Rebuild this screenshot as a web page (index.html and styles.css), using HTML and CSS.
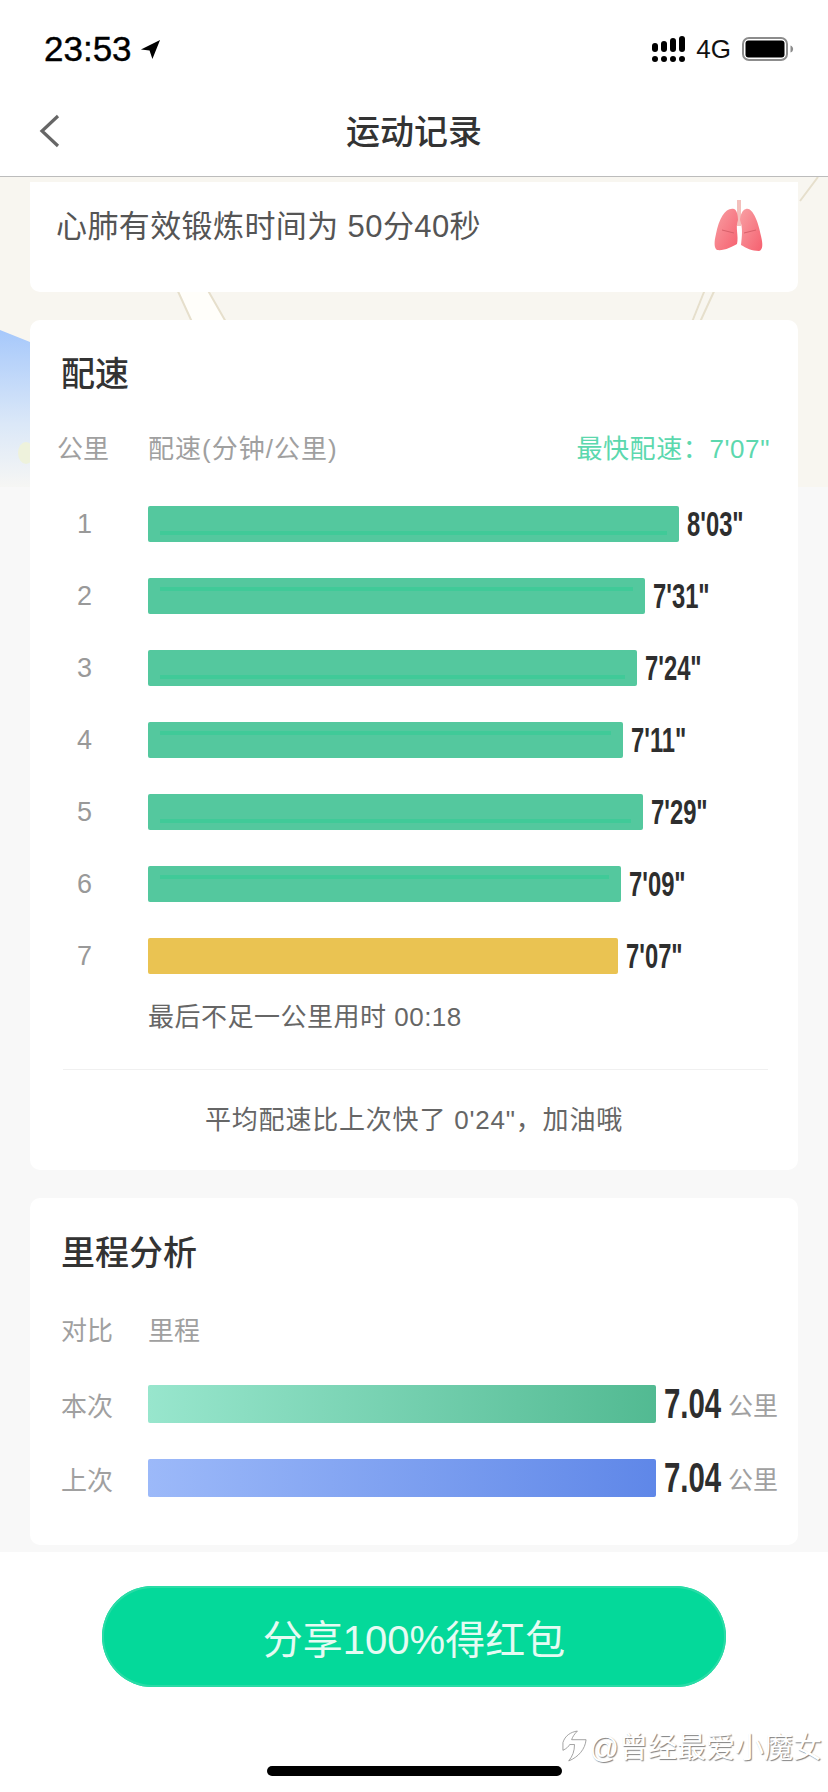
FILE: index.html
```html
<!DOCTYPE html>
<html lang="zh-CN">
<head>
    <meta charset="UTF-8">
    <title>运动记录</title>
    <link rel="stylesheet" href="styles.css">
</head>
<body>
    <div class="phone">
        <div class="status-bar">
            <div class="status-time">
                <span>23:53</span>
                <svg class="location" viewBox="0 0 22 22"><path d="M21 1 L1 11 L10 12 L13 21 Z" fill="#000"/></svg>
            </div>
            <div class="status-right">
                <svg class="signal" viewBox="0 0 33 26" fill="#000">
                    <rect x="0" y="7" width="6" height="9" rx="3"/><rect x="0" y="20" width="6" height="6" rx="3"/>
                    <rect x="9" y="5" width="6" height="11" rx="3"/><rect x="9" y="20" width="6" height="6" rx="3"/>
                    <rect x="18" y="2" width="6" height="14" rx="3"/><rect x="18" y="20" width="6" height="6" rx="3"/>
                    <rect x="27" y="0" width="6" height="16" rx="3"/><rect x="27" y="20" width="6" height="6" rx="3"/>
                </svg>
                <span class="net">4G</span>
                <svg class="battery" viewBox="0 0 53 24">
                    <rect x="1" y="1" width="44" height="22" rx="6" fill="none" stroke="#8c8c8c" stroke-width="2"/>
                    <rect x="3.5" y="3.5" width="39" height="17" rx="3" fill="#000"/>
                    <path d="M48.5 8.5 C52 9.5 52 14.5 48.5 15.5 Z" fill="#8c8c8c"/>
                </svg>
            </div>
        </div>

        <div class="nav-bar">
            <svg class="back" viewBox="0 0 22 34"><path d="M19 2 L3 17 L19 32" fill="none" stroke="#666" stroke-width="3.2"/></svg>
            <h1>运动记录</h1>
        </div>

        <div class="content">
            <div class="map-bg">
                <svg class="map-roads" viewBox="0 0 828 310" preserveAspectRatio="none">
                    <defs>
                        <linearGradient id="water" x1="0" y1="0" x2="0" y2="1">
                            <stop offset="0" stop-color="#a6c8fb"/>
                            <stop offset="0.6" stop-color="#dbe8f8"/>
                            <stop offset="1" stop-color="#f6f6f4"/>
                        </linearGradient>
                    </defs>
                    <path d="M176 110 L192 145 L226 145 L206 110 Z" fill="#fffefa"/>
                    <path d="M176 110 L192 145 M206 110 L226 145 M716 110 L700 145 M706 110 L692 145 M818 0 L800 24" fill="none" stroke="#e6dfcc" stroke-width="2"/>
                    <path d="M0 153 L30 165 L30 310 L0 310 Z" fill="url(#water)"/>
                    <ellipse cx="26" cy="276" rx="8" ry="11" fill="#eef2dc"/>
                </svg>
            </div>

            <div class="card card-lung">
                <p>心肺有效锻炼时间为 50分40秒</p>
                <svg class="lung" viewBox="0 0 50 54">
                    <defs>
                        <linearGradient id="lobe" x1="0" y1="0" x2="1" y2="1">
                            <stop offset="0" stop-color="#f8a0a4"/>
                            <stop offset="1" stop-color="#f6606f"/>
                        </linearGradient>
                    </defs>
                    <rect x="23" y="0" width="4" height="26" fill="#f3c0bc"/>
                    <path d="M20 9 C12 7 5 18 2 34 C0 42 0 48 3 50 C10 51 18 47 23 44 C25 36 21 28 24 20 C24 16 23 10 20 9 Z" fill="url(#lobe)"/>
                    <path d="M32 9 C38 7 44 20 47 36 C49 44 49 50 45 51 C38 51 32 48 27 45 C28 36 29 28 26 20 C26 16 28 10 32 9 Z" fill="url(#lobe)"/>
                    <path d="M8 30 L20 33 M30 33 L42 30" fill="none" stroke="#d9606a" stroke-width="1"/>
                </svg>
            </div>

            <div class="card card-pace">
                <h2>配速</h2>
                <div class="pace-head">
                    <span class="col-km">公里</span>
                    <span class="col-pace">配速(分钟/公里)</span>
                    <span class="fastest">最快配速：7'07"</span>
                </div>
                <div class="pace-list">
                    <div class="pace-row">
                        <span class="pace-no">1</span>
                        <div class="bar bar-low" style="width: 532px"></div>
                        <span class="pace-val">8'03"</span>
                    </div>
                    <div class="pace-row">
                        <span class="pace-no">2</span>
                        <div class="bar" style="width: 497px"></div>
                        <span class="pace-val">7'31"</span>
                    </div>
                    <div class="pace-row">
                        <span class="pace-no">3</span>
                        <div class="bar bar-low" style="width: 489px"></div>
                        <span class="pace-val">7'24"</span>
                    </div>
                    <div class="pace-row">
                        <span class="pace-no">4</span>
                        <div class="bar" style="width: 475px"></div>
                        <span class="pace-val">7'11"</span>
                    </div>
                    <div class="pace-row">
                        <span class="pace-no">5</span>
                        <div class="bar bar-low" style="width: 495px"></div>
                        <span class="pace-val">7'29"</span>
                    </div>
                    <div class="pace-row">
                        <span class="pace-no">6</span>
                        <div class="bar" style="width: 473px"></div>
                        <span class="pace-val">7'09"</span>
                    </div>
                    <div class="pace-row">
                        <span class="pace-no">7</span>
                        <div class="bar bar-best" style="width: 470px"></div>
                        <span class="pace-val">7'07"</span>
                    </div>
                </div>
                <p class="pace-note">最后不足一公里用时 00:18</p>
                <p class="pace-summary">平均配速比上次快了 0'24"，加油哦</p>
            </div>

            <div class="card card-dist">
                <h2>里程分析</h2>
                <div class="dist-head">
                    <span class="col-km">对比</span>
                    <span>里程</span>
                </div>
                <div class="dist-row">
                    <span class="col-km">本次</span>
                    <div class="dist-bar dist-now"></div>
                    <span class="dist-val">7.04</span>
                    <span class="dist-unit">公里</span>
                </div>
                <div class="dist-row">
                    <span class="col-km">上次</span>
                    <div class="dist-bar dist-last"></div>
                    <span class="dist-val">7.04</span>
                    <span class="dist-unit">公里</span>
                </div>
            </div>
        </div>

        <div class="footer">
            <button class="share-btn">分享100%得红包</button>
            <div class="watermark">
                <svg class="wm-logo" viewBox="0 0 28 34"><path d="M2 14 C4 7 10 3 17 2 C14 5 12 8 11 11 L26 11 C25 21 18 29 8 33 C12 28 14 23 14 16 L9 16 C8 18 6 20 2 22 Z" fill="#fff" stroke="#888" stroke-width="0.8"/></svg>
                <span>@曾经最爱小魔女</span>
            </div>
            <div class="home-bar"></div>
        </div>
    </div>
</body>
</html>
```

FILE: styles.css
```css
* {
    margin: 0;
    padding: 0;
    box-sizing: border-box;
}

body {
    font-family: 'Liberation Sans', 'Noto Sans CJK SC', sans-serif;
    background-color: #fff;
    color: #333;
}

.phone {
    width: 828px;
    height: 1792px;
    display: flex;
    flex-direction: column;
    overflow: hidden;
}

.status-bar {
    height: 90px;
    padding: 8px 33px 0 44px;
    display: flex;
    justify-content: space-between;
    align-items: center;
}

.status-time {
    display: flex;
    align-items: center;
    gap: 8px;
    font-size: 35px;
    font-weight: 500;
    color: #000;
    -webkit-text-stroke: 0.4px #000;
}

.location {
    width: 21px;
    height: 21px;
}

.status-right {
    display: flex;
    align-items: center;
    gap: 11px;
}

.signal {
    width: 33px;
    height: 26px;
}

.net {
    font-size: 26px;
    color: #111;
}

.battery {
    width: 53px;
    height: 24px;
}

.nav-bar {
    height: 87px;
    padding-bottom: 8px;
    position: relative;
    display: flex;
    justify-content: center;
    align-items: center;
    border-bottom: 1px solid #bcbcbc;
}

.nav-bar h1 {
    font-size: 34px;
    font-weight: 500;
    color: #333;
}

.back {
    position: absolute;
    left: 39px;
    top: 24px;
    width: 22px;
    height: 34px;
}

.content {
    height: 1375px;
    position: relative;
    background-color: #f8f8f8;
    padding: 5px 30px 0 30px;
    display: flex;
    flex-direction: column;
    gap: 28px;
}

.map-bg {
    position: absolute;
    left: 0;
    top: 0;
    width: 100%;
    height: 310px;
    background-color: #f8f6f0;
}

.map-roads {
    display: block;
    width: 100%;
    height: 100%;
}

.card {
    position: relative;
    background-color: #fff;
    border-radius: 10px;
}

.card h2 {
    font-size: 34px;
    font-weight: 500;
    line-height: 40px;
    color: #333;
}

.card-lung {
    height: 110px;
    border-radius: 0 0 10px 10px;
    padding: 0 34px 0 26px;
    display: flex;
    justify-content: space-between;
    align-items: flex-start;
}

.card-lung p {
    margin-top: 25px;
    font-size: 31px;
    line-height: 40px;
    letter-spacing: 0.4px;
    color: #555;
}

.lung {
    margin-top: 18px;
    width: 50px;
    height: 54px;
}

.card-pace {
    height: 850px;
    padding: 34px 28px 0 31px;
}

.pace-head {
    margin-top: 37px;
    margin-left: -4px;
    display: flex;
    align-items: center;
    font-size: 26px;
    line-height: 36px;
    color: #a0a0a0;
}

.col-km {
    width: 91px;
    flex-shrink: 0;
    font-size: 26px;
    color: #a0a0a0;
}

.col-pace {
    letter-spacing: 1px;
}

.fastest {
    margin-left: auto;
    letter-spacing: 0.6px;
    color: #5cd8ae;
}

.pace-list {
    margin-top: 39px;
    margin-left: -31px;
    display: flex;
    flex-direction: column;
    gap: 36px;
}

.pace-row {
    height: 36px;
    display: flex;
    align-items: center;
}

.pace-no {
    width: 118px;
    padding-left: 47px;
    font-size: 27px;
    color: #999;
}

.bar {
    height: 36px;
    border-radius: 2px;
    background-color: #54c89e;
    background-image: linear-gradient(#40ca98, #40ca98);
    background-repeat: no-repeat;
    background-size: calc(100% - 24px) 4px;
    background-position: 12px 9px;
}

.bar-low {
    background-position: 12px 25px;
}

.bar-best {
    background-color: #eac352;
    background-image: none;
}

.pace-val {
    display: inline-block;
    margin-left: 8px;
    font-size: 35px;
    font-weight: 700;
    color: #2e2e2e;
    white-space: nowrap;
    transform: scaleX(0.68);
    transform-origin: left center;
}

.pace-note {
    margin-top: 25px;
    margin-left: 87px;
    font-size: 26px;
    line-height: 36px;
    letter-spacing: 0.5px;
    color: #666;
}

.pace-summary {
    margin-top: 34px;
    margin-left: -31px;
    margin-right: -28px;
    padding-top: 33px;
    font-size: 26px;
    line-height: 36px;
    letter-spacing: 0.8px;
    text-align: center;
    color: #666;
    position: relative;
}

.pace-summary::before {
    content: '';
    position: absolute;
    left: 33px;
    right: 30px;
    top: 0;
    height: 1px;
    background-color: #f0f0f0;
}

.card-dist {
    height: 347px;
    padding: 35px 20px 0 31px;
}

.dist-head {
    margin-top: 40px;
    display: flex;
    font-size: 26px;
    line-height: 36px;
    color: #a0a0a0;
}

.dist-head .col-km {
    width: 87px;
}

.dist-row {
    margin-top: 36px;
    height: 38px;
    display: flex;
    align-items: center;
}

.dist-row .col-km {
    width: 87px;
}

.dist-bar {
    width: 508px;
    height: 38px;
    flex-shrink: 0;
    border-radius: 2px;
}

.dist-now {
    background-image: linear-gradient(90deg, #98e6cd, #52ba92);
}

.dist-last {
    background-image: linear-gradient(90deg, #9cb9f9, #5f87e8);
}

.dist-val {
    width: 58px;
    flex-shrink: 0;
    margin-left: 8px;
    font-size: 42px;
    font-weight: 700;
    color: #2e2e2e;
    white-space: nowrap;
    transform: scaleX(0.7);
    transform-origin: left center;
}

.dist-unit {
    margin-left: 6px;
    font-size: 25px;
    color: #a0a0a0;
    white-space: nowrap;
}

.footer {
    flex: 1;
    position: relative;
    background-color: #fff;
    padding-top: 34px;
    display: flex;
    flex-direction: column;
    align-items: center;
}

.share-btn {
    width: 624px;
    height: 101px;
    border: none;
    border-radius: 51px;
    background-color: #04d99a;
    box-shadow: inset 0 0 0 2px #2adba6;
    font-family: inherit;
    font-size: 40px;
    color: #e6fbf3;
}

.watermark {
    position: absolute;
    right: 6px;
    top: 172px;
    display: flex;
    align-items: center;
    gap: 2px;
    font-size: 29px;
    color: #fff;
    text-shadow: 1px 1px 1px #808080;
}

.wm-logo {
    width: 27px;
    height: 33px;
}

.home-bar {
    position: absolute;
    left: 267px;
    top: 214px;
    width: 295px;
    height: 10px;
    border-radius: 5px;
    background-color: #000;
}
```
